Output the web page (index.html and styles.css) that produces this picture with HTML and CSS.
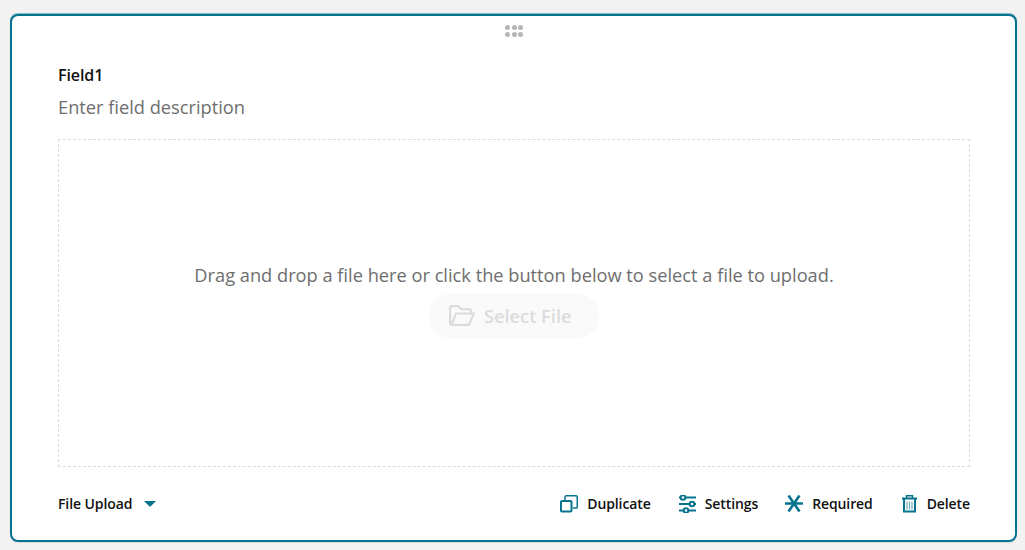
FILE: index.html
```html
<!DOCTYPE html>
<html lang="en">
<head>
    <meta charset="UTF-8">
    <meta name="viewport" content="width=device-width, initial-scale=1.0">
    <title>File Upload Field</title>
    <link rel="stylesheet" href="styles.css">
</head>
<body>
    <main class="card">
        <div class="drag-handle">
            <span></span><span></span><span></span>
            <span></span><span></span><span></span>
        </div>
        <h2 class="field-title">Field1</h2>
        <p class="field-desc">Enter field description</p>

        <div class="dropzone">
            <p class="dropzone-text">Drag and drop a file here or click the button below to select a file to upload.</p>
            <button type="button" class="select-btn" disabled>
                <svg class="folder" viewBox="0 0 26 21" width="26" height="21" fill="none" stroke="currentColor" stroke-width="2.2" stroke-linejoin="round">
                    <path d="M2.500 19.900 1.100 18.500V2.500L2.500 1.100h6.500l3 3h8.500L22 5.500V8"/>
                    <path d="M2.500 19.900h17.500L24.900 8.500H7L2.500 19.900Z"/>
                </svg>
                Select File
            </button>
        </div>

        <footer class="toolbar">
            <button type="button" class="type-select">File Upload <span class="caret"></span></button>
            <div class="actions">
                <button type="button" class="action">
                    <svg viewBox="0 0 18 18" width="18" height="18" fill="none" stroke="currentColor" stroke-width="2">
                        <rect x="1" y="6" width="10.500" height="10.500" rx="1"/>
                        <path stroke-width="1.500" d="M5 5.500V2a1.250 1.250 0 0 1 1.250-1.250H16A1.250 1.250 0 0 1 17.250 2v9.750A1.250 1.250 0 0 1 16 13h-3"/>
                    </svg>
                    Duplicate
                </button>
                <button type="button" class="action">
                    <svg viewBox="0 0 18 18" width="18" height="18" fill="none" stroke="currentColor" stroke-width="2">
                        <path d="M8 2.500h10M1 2.500h1"/><circle cx="5" cy="2.500" r="2.300"/>
                        <path d="M1 9h10M17 9h1"/><circle cx="14" cy="9" r="2.300"/>
                        <path d="M11 15.500h7M1 15.500h4"/><circle cx="8" cy="15.500" r="2.300"/>
                    </svg>
                    Settings
                </button>
                <button type="button" class="action">
                    <svg viewBox="0 0 18 18" width="18" height="18" fill="none" stroke="currentColor" stroke-width="2.600">
                        <path d="M0 8.500h18M3.500 .5l11 16M14.500 .5l-11 16"/>
                    </svg>
                    Required
                </button>
                <button type="button" class="action">
                    <svg viewBox="0 0 18 18" width="18" height="18" fill="none" stroke="currentColor" stroke-width="2">
                        <path d="M2 3.500h15"/>
                        <path stroke-width="1.500" d="M6.500 3V.8h6V3"/>
                        <path d="M4 4v12.500h11V4"/>
                        <path stroke-width="1.300" opacity=".55" d="M7 6.500v8M9.500 6.500v8M12 6.500v8"/>
                    </svg>
                    Delete
                </button>
            </div>
        </footer>
    </main>
</body>
</html>
```

FILE: styles.css
```css
html, body {
    height: 100%;
}
body {
    font-family: "Open Sans", Arial, sans-serif;
    margin: 0;
    padding: 14px 8px 8px 10px;
    box-sizing: border-box;
    background-color: #f2f2f2;
}
button {
    font-family: inherit;
    border: none;
    background: none;
    padding: 0;
}
.card {
    height: 100%;
    box-sizing: border-box;
    display: flex;
    flex-direction: column;
    padding: 9px 45px 26px 46px;
    background: white;
    border: 2px solid #07748f;
    border-radius: 8px;
    box-shadow: 0 -1px 0 #86b8c4, 0 1px 1px rgba(0, 0, 0, 0.1);
}
.drag-handle {
    display: grid;
    grid-template-columns: repeat(3, 5px);
    column-gap: 1.5px;
    row-gap: 2px;
    justify-content: center;
    height: 12px;
}
.drag-handle span {
    width: 5px;
    height: 5px;
    border-radius: 50%;
    background-color: #b5b5b5;
}
.field-title {
    margin: 27px 0 0;
    font-size: 16px;
    line-height: 22px;
    font-weight: 600;
    letter-spacing: -0.1px;
    color: #111;
}
.field-desc {
    margin: 9px 0 0;
    font-size: 18.24px;
    line-height: 24px;
    color: #6e6e6e;
}
.dropzone {
    height: 328px;
    box-sizing: border-box;
    margin-top: 20px;
    border: 1px dashed #dcdcdc;
    display: flex;
    flex-direction: column;
    align-items: center;
    padding-top: 123px;
}
.dropzone-text {
    margin: 0;
    font-size: 18.24px;
    line-height: 24px;
    color: #6e6e6e;
}
.select-btn {
    display: flex;
    align-items: center;
    gap: 9px;
    width: 170px;
    height: 46px;
    margin-top: 6px;
    padding: 0 0 1px 20px;
    box-sizing: border-box;
    border-radius: 23px;
    background-color: #fafafa;
    color: #dcdcdc;
    font-size: 18.24px;
    font-weight: 600;
}
.toolbar {
    display: flex;
    justify-content: space-between;
    align-items: center;
    margin-top: 27px;
}
.type-select, .action {
    display: flex;
    align-items: center;
    font-size: 14px;
    font-weight: 600;
    letter-spacing: -0.1px;
    line-height: 20px;
    color: #111;
}
.caret {
    width: 0;
    height: 0;
    margin-left: 12px;
    border-left: 6px solid transparent;
    border-right: 6px solid transparent;
    border-top: 6px solid #07748f;
}
.actions {
    display: flex;
    gap: 27px;
}
.action {
    gap: 9px;
}
.action svg {
    color: #07748f;
}
```
